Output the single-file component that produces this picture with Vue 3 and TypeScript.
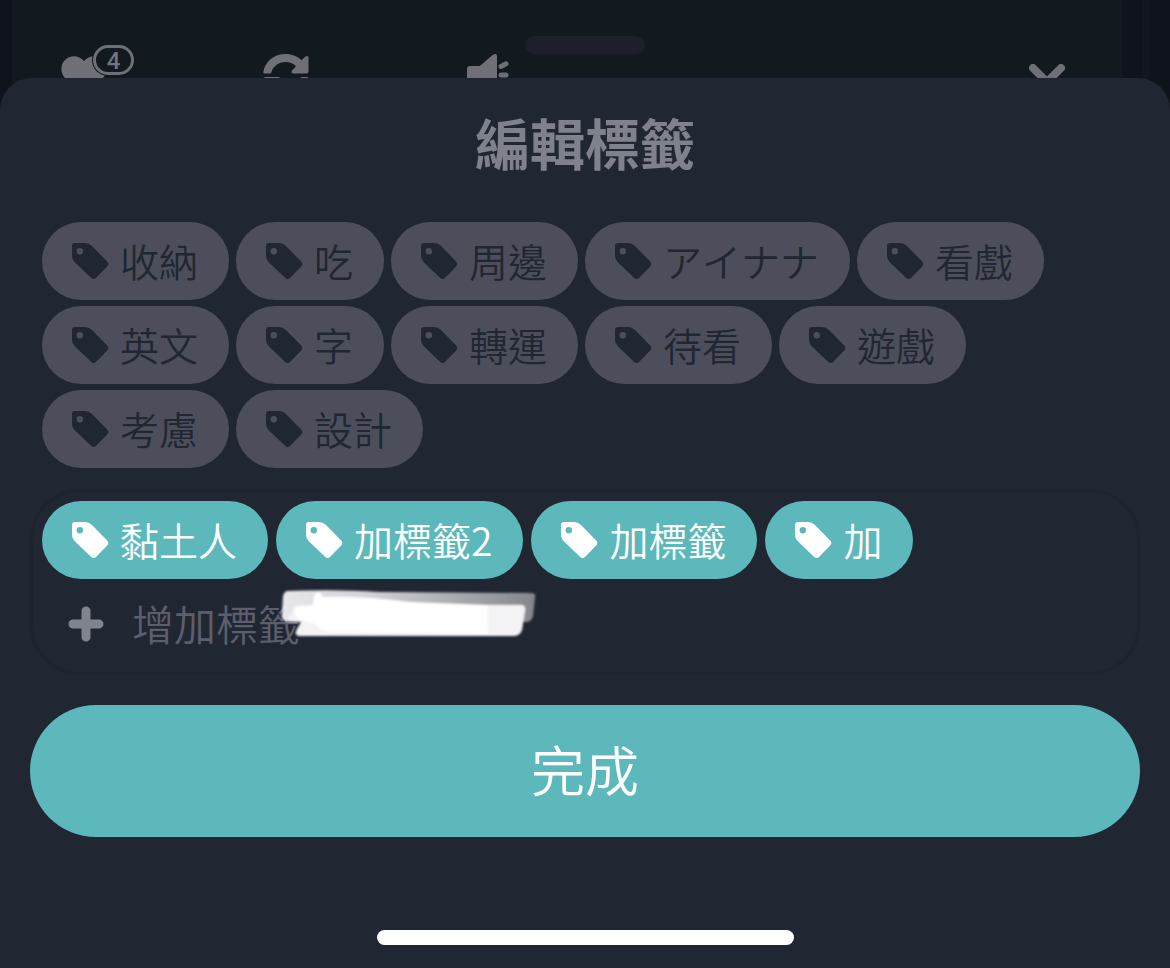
<script setup lang="ts">
import { ref } from 'vue'

const available = ref<string[]>([
  '收納', '吃', '周邊', 'アイナナ', '看戲',
  '英文', '字', '轉運', '待看', '遊戲',
  '考慮', '設計',
])
const selected = ref<string[]>(['黏土人', '加標籤2', '加標籤', '加'])
const draft = ref('')

const tagPath =
  'M0 3Q0 0 3 0H13Q17 0 20 3L35.200 18.500Q37.500 21 35.200 23.500L24 35Q21.500 37.200 19 34.800L2.500 19Q0 16.500 0 13ZM11 8.200A3.200 3.200 0 1 0 4.600 8.200A3.200 3.200 0 1 0 11 8.200Z'

function select(tag: string) {
  available.value = available.value.filter((t) => t !== tag)
  selected.value.push(tag)
}

function deselect(tag: string) {
  selected.value = selected.value.filter((t) => t !== tag)
  available.value.push(tag)
}

function addDraft() {
  const tag = draft.value.trim()
  if (tag && !selected.value.includes(tag)) selected.value.push(tag)
  draft.value = ''
}
</script>

<template>
  <div class="screen">
    <header class="backdrop">
      <div class="toolbar">
        <button class="tool heart" type="button" aria-label="4">
          <svg width="46" height="42" viewBox="0 0 46 42" aria-hidden="true">
            <path d="M23 5C28-1 36-1 41 3C47 8 47 17 42 22L23 41L4 22C-1 17-1 8 5 3C10-1 18-1 23 5Z" />
          </svg>
          <span class="badge">4</span>
        </button>
        <button class="tool refresh" type="button" aria-label="重新整理">
          <svg width="46" height="46" viewBox="0 0 46 46" aria-hidden="true">
            <path d="M1.500 19.500Q0 19.500 .3 18C2 7.500 11 0 22.500 0C29 0 34.500 2.300 38.500 6.200L42.500 2.500Q45.500 1 45.500 4V17.500Q45.500 19.500 43.500 19.500H30.500Q27.500 19 29 16.500L33 12.200C30 9.200 26.500 8 22.500 8C15.500 8 10 12.500 8.500 18Q8.200 19.500 6.800 19.500Z" />
            <path d="M2.500 23H15Q18 23 16.500 26L12 31C20 38 33 36 37 25Q37.500 23 39 23H44Q46 23 45 26C42 44 20 52 7 37L3 41Q.5 43 .5 39V25Q.5 23 2.500 23Z" />
          </svg>
        </button>
        <button class="tool speaker" type="button" aria-label="音量">
          <svg width="46" height="42" viewBox="0 0 46 42" aria-hidden="true">
            <path d="M3 12H12Q13 12 14 11L25 1.500Q30-1.500 30 2V40Q30 43 26 41L12 30H3Q0 30 0 27V15Q0 12 3 12Z" />
            <path class="ray" d="M34 12.500L39 9.800M34 21H39M34 29L39 32" />
          </svg>
        </button>
        <button class="tool close" type="button" aria-label="關閉">
          <svg width="36" height="36" viewBox="0 0 36 36" aria-hidden="true">
            <path d="M4 4L32 32M32 4L4 32" />
          </svg>
        </button>
      </div>
      <div class="edge"></div>
      <div class="handle"></div>
    </header>

    <main class="sheet">
      <h1 class="title">編輯標籤</h1>

      <div class="tags available">
        <button v-for="tag in available" :key="tag" class="tag" type="button" @click="select(tag)">
          <svg class="tag-icon" width="38" height="38" viewBox="-1 -1 38 38" aria-hidden="true">
            <path fill-rule="evenodd" :d="tagPath" />
          </svg>
          <span>{{ tag }}</span>
        </button>
      </div>

      <section class="field">
        <div class="tags chosen">
          <button v-for="tag in selected" :key="tag" class="tag active" type="button" @click="deselect(tag)">
            <svg class="tag-icon" width="38" height="38" viewBox="-1 -1 38 38" aria-hidden="true">
              <path fill-rule="evenodd" :d="tagPath" />
            </svg>
            <span>{{ tag }}</span>
          </button>
        </div>
        <div class="entry">
          <label for="new-tag" aria-label="增加標籤">
            <svg class="plus" width="36" height="36" viewBox="0 0 36 36" aria-hidden="true">
              <path d="M5 18H31M18 5V31" />
            </svg>
          </label>
          <input id="new-tag" v-model="draft" type="text" placeholder="增加標籤" @keyup.enter="addDraft" />
          <svg class="scribble" width="260" height="54" viewBox="0 0 260 54" aria-hidden="true">
            <defs>
              <linearGradient id="veil" x1="0" y1="0" x2="1" y2="0">
                <stop offset="0" stop-color="#e8e8eb" />
                <stop offset=".35" stop-color="#d2d2d6" />
                <stop offset="1" stop-color="#85868c" />
              </linearGradient>
              <filter id="soft" x="-5%" y="-20%" width="110%" height="140%">
                <feGaussianBlur stdDeviation="1" />
              </filter>
            </defs>
            <g filter="url(#soft)">
              <path fill="url(#veil)" d="M8 3Q60 1 100 4L252 5Q257 5 256 9L254 28Q253 33 248 34L12 34Q1 34 3 26L4 8Q5 4 8 3Z" />
              <path fill="#f3f3f5" d="M18 17L242 17Q247 17 246 23L243 42Q241 48 234 48L22 48Q14 48 18 41L22 34L8 32Z" />
              <path fill="#fff" d="M35 8Q39 0 44 9Q85 8 130 14L209 17V46L60 44Q42 45 36 36L18 31L14 20L34 17Z" />
            </g>
          </svg>
        </div>
      </section>

      <button class="done" type="button">完成</button>
      <div class="home"></div>
    </main>
  </div>
</template>

<style>
body {
  margin: 0;
  background: #0f131b;
}
</style>

<style scoped>
.screen {
  display: flex;
  flex-direction: column;
  min-height: 100vh;
  background: #0f131b;
  font-family: "Noto Sans CJK TC", "Noto Sans CJK JP", sans-serif;
}

button {
  margin: 0;
  padding: 0;
  border: 0;
  background: none;
  font-family: inherit;
  font-kerning: none;
  cursor: pointer;
}

svg {
  display: block;
  flex: none;
}

.backdrop {
  position: relative;
  display: flex;
  gap: 21px;
  height: 118px;
  padding: 0 21px 0 12px;
}

.toolbar {
  flex: 1;
  display: flex;
  align-items: flex-start;
  padding: 54px 57px 0 49px;
  background: #12191f;
}

.edge {
  width: 6px;
  background: #12161f;
}

.tool {
  position: relative;
  fill: #6f7077;
}

.heart {
  margin: 2px 156px 0 0;
}

.refresh {
  margin-right: 158px;
}

.close {
  margin: 10px 0 0 auto;
}

.close path {
  fill: none;
  stroke: #6f7077;
  stroke-width: 8;
  stroke-linecap: round;
}

.ray {
  fill: none;
  stroke: #6f7077;
  stroke-width: 5;
  stroke-linecap: round;
}

.badge {
  position: absolute;
  left: 32px;
  top: -11px;
  box-sizing: border-box;
  width: 41px;
  height: 30px;
  border: 3px solid #6f7077;
  border-radius: 15px;
  background: #12191f;
  box-shadow: 0 0 0 1px #12191f;
  color: #74757c;
  font: 500 24px/26px Roboto, "Liberation Sans", sans-serif;
  text-align: center;
}

.handle {
  position: absolute;
  top: 36px;
  left: 50%;
  width: 120px;
  height: 18px;
  margin-left: -60px;
  border-radius: 9px;
  background: #1d202b;
}

.sheet {
  position: relative;
  flex: 1;
  display: flex;
  flex-direction: column;
  margin-top: -40px;
  padding: 30px 30px 23px;
  border-radius: 32px 32px 0 0;
  background: #202733;
}

.title {
  margin: 0 0 48px;
  color: #7f818c;
  font-size: 55px;
  font-weight: 700;
  line-height: 66px;
  text-align: center;
}

.tags {
  display: flex;
  flex-wrap: wrap;
  gap: 6px 7px;
}

.available {
  margin: 0 12px 21px;
}

.chosen {
  column-gap: 8px;
}

.tag {
  display: flex;
  align-items: center;
  gap: 11px;
  height: 78px;
  padding: 0 31px 0 29px;
  border-radius: 39px;
  background: #4c4f5b;
  color: #202733;
  fill: #202733;
  font-size: 39px;
  font-weight: 350;
  line-height: 74px;
  white-space: nowrap;
}

.tag span {
  padding-bottom: 3px;
}

.tag.active {
  background: #5cb8ba;
  color: #fff;
  fill: #fff;
}

.field {
  padding: 9px 9px 3px;
  border: 3px solid #1d232f;
  border-radius: 50px;
}

.entry {
  position: relative;
  display: flex;
  align-items: center;
  gap: 28px;
  height: 90px;
  padding: 0 26px;
}

.plus path {
  stroke: #82848d;
  stroke-width: 9;
  stroke-linecap: round;
}

.entry input {
  flex: 1;
  min-width: 0;
  height: 62px;
  padding: 0 0 4px;
  border: 0;
  outline: 0;
  background: none;
  color: #fff;
  font-family: inherit;
  font-size: 42px;
  font-weight: 350;
}

.entry input::placeholder {
  color: #5c5f6b;
  opacity: 1;
}

.scribble {
  position: absolute;
  left: 237px;
  top: 9px;
  pointer-events: none;
}

.done {
  height: 132px;
  margin: 30px 0;
  padding-bottom: 4px;
  border-radius: 66px;
  background: #5cb8ba;
  color: #fff;
  font-size: 54px;
  font-weight: 350;
  line-height: 128px;
}

.home {
  align-self: center;
  width: 417px;
  max-width: 60%;
  height: 15px;
  margin-top: auto;
  border-radius: 8px;
  background: #fff;
}
</style>
